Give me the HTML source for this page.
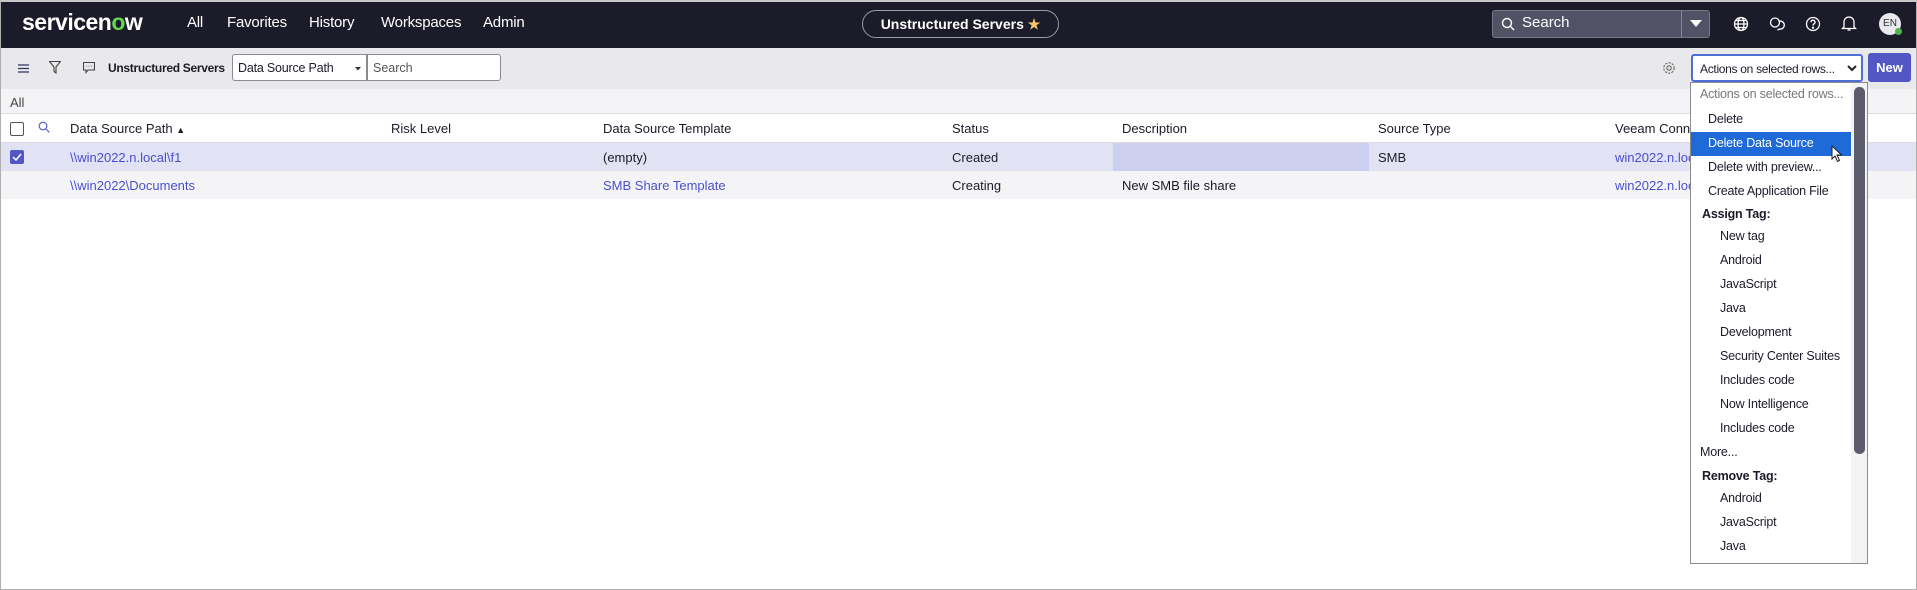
<!DOCTYPE html>
<html><head><meta charset="utf-8"><style>
*{box-sizing:border-box;margin:0;padding:0}
body{width:1917px;height:590px;overflow:hidden;font-family:"Liberation Sans",sans-serif;font-size:13px;color:#1b1b29;background:#fff;position:relative}
.frame{position:absolute;left:0;top:0;width:1917px;height:590px;border:1px solid #b0b0b0;border-top:2px solid #c8c8c8;pointer-events:none;z-index:50}
.a{position:absolute;white-space:nowrap}
.nav{position:absolute;left:0;top:0;width:1917px;height:48px;background:#1b1b29}
.nav .l{color:#fff;font-size:15px;top:14px;letter-spacing:-0.2px}
.tb{position:absolute;left:0;top:48px;width:1917px;height:41px;background:#e9e9ec}
.allr{position:absolute;left:0;top:89px;width:1917px;height:25px;background:#f4f4f6;border-bottom:1px solid #dcdce0}
.hdr{position:absolute;left:0;top:114px;width:1917px;height:29px;background:#fff;border-bottom:1px solid #dcdce0}
.r1{position:absolute;left:0;top:143px;width:1917px;height:28px;background:#e1e2f3}
.r2{position:absolute;left:0;top:171px;width:1917px;height:28px;background:#f4f4f6}
.lk{color:#4a4fcf}
.dd{position:absolute;left:1690px;top:82px;width:178px;height:482px;background:#fff;border:1px solid #8a8a8f;z-index:10}
.dd .i{position:absolute;white-space:nowrap;font-size:12.5px;letter-spacing:-0.2px}
</style></head><body>
<div class="nav">
 <div class="a" style="left:22px;top:9px;color:#fff;font-size:23px;font-weight:bold;letter-spacing:-0.5px">servicen<span style="color:#62d84e">o</span>w</div>
 <div class="a l" style="left:187px">All</div>
 <div class="a l" style="left:227px">Favorites</div>
 <div class="a l" style="left:309px">History</div>
 <div class="a l" style="left:381px">Workspaces</div>
 <div class="a l" style="left:483px">Admin</div>
 <div class="a" style="left:862px;top:10px;width:197px;height:28px;border:1px solid #9a9aa8;border-radius:14px;color:#fff;font-weight:bold;font-size:14px;text-align:center;line-height:26px">Unstructured Servers <span style="color:#f5c86a">★</span></div>
 <div class="a" style="left:1492px;top:10px;width:218px;height:28px;background:#525266;border:1px solid #77778a;border-radius:3px"></div>
 <div class="a" style="left:1681px;top:10px;width:1px;height:28px;background:#888"></div>
 <svg class="a" style="left:1501px;top:17px" width="14" height="14"><circle cx="6" cy="6" r="4.5" fill="none" stroke="#fff" stroke-width="1.4"/><path d="M9.5 9.5L13 13" stroke="#fff" stroke-width="1.4"/></svg>
 <div class="a" style="left:1522px;top:14px;color:#fff;font-size:15px">Search</div>
 <svg class="a" style="left:1690px;top:20px" width="12" height="8"><path d="M0 0H12L6 7Z" fill="#fff"/></svg>
 <svg class="a" style="left:1733px;top:16px" width="16" height="16" fill="none" stroke="#fff" stroke-width="1.3"><circle cx="8" cy="8" r="6.5"/><ellipse cx="8" cy="8" rx="3" ry="6.5"/><path d="M1.5 8H14.5M2.5 4.5H13.5M2.5 11.5H13.5"/></svg>
 <svg class="a" style="left:1769px;top:16px" width="16" height="16" fill="none" stroke="#fff" stroke-width="1.3"><circle cx="6" cy="6.5" r="4.5"/><path d="M9.5 5.5a4 4 0 1 1 1 7.5l-2 1"/></svg>
 <svg class="a" style="left:1805px;top:16px" width="16" height="16" fill="none" stroke="#fff" stroke-width="1.3"><circle cx="8" cy="8" r="6.5"/><path d="M6 6.2a2 2 0 1 1 2.8 1.8c-.6.3-.8.8-.8 1.5"/><circle cx="8" cy="11.7" r=".5" fill="#fff"/></svg>
 <svg class="a" style="left:1841px;top:15px" width="16" height="17" fill="none" stroke="#fff" stroke-width="1.3"><path d="M3 12V7a5 5 0 0 1 10 0v5l1.5 1.5h-13z"/><path d="M6.5 15h3"/></svg>
 <div class="a" style="left:1879px;top:13px;width:22px;height:22px;border-radius:50%;background:#e9e9ee;color:#333;font-size:10px;text-align:center;line-height:22px">EN</div>
 <div class="a" style="left:1895px;top:28px;width:7px;height:7px;border-radius:50%;background:#4cb648"></div>
</div>
<div class="tb">
 <svg class="a" style="left:18px;top:16px" width="11" height="9" stroke="#333366" stroke-width="1.3"><path d="M0 1H11M0 4.5H11M0 8H11"/></svg>
 <svg class="a" style="left:49px;top:13px" width="12" height="13" fill="none" stroke="#444" stroke-width="1.1"><path d="M.5 .5H11.5L7 6V12L5 10.5V6Z"/></svg>
 <svg class="a" style="left:83px;top:14px" width="12" height="12" fill="none" stroke="#444" stroke-width="1.1"><path d="M.5 .5H11.5V8H5L3 10.5V8H.5Z"/><path d="M3.5 4.2h.6M5.7 4.2h.6M7.9 4.2h.6"/></svg>
 <div class="a" style="left:108px;top:13px;font-weight:bold;font-size:12px;letter-spacing:-0.3px">Unstructured Servers</div>
 <div class="a" style="left:232px;top:6px;width:135px;height:27px;background:#fff;border:1px solid #8a8a90;border-radius:3px 0 0 3px;padding:6px 5px;font-size:12.5px;letter-spacing:-0.2px">Data Source Path</div>
 <svg class="a" style="left:355px;top:19px" width="6" height="4"><path d="M0 0H6L3 3.5Z" fill="#333"/></svg>
 <div class="a" style="left:367px;top:6px;width:134px;height:27px;background:#fff;border:1px solid #8a8a90;border-radius:0 3px 3px 0;padding:6px 5px;color:#555;font-size:12.5px">Search</div>
 <svg class="a" style="left:1662px;top:13px" width="14" height="14" fill="none" stroke="#666" stroke-width="1.1"><circle cx="7" cy="7" r="2.2"/><circle cx="7" cy="7" r="5.2" stroke-dasharray="2.2 1.2"/></svg>
 <div class="a" style="left:1691px;top:6px;width:172px;height:28px;background:#fff;border:2px solid #4f6ed8;border-radius:3px;padding:6px 7px;font-size:12px;letter-spacing:-0.3px">Actions on selected rows...</div>
 <svg class="a" style="left:1847px;top:17px" width="10" height="7" fill="none" stroke="#222" stroke-width="2"><path d="M1 1L5 5L9 1"/></svg>
 <div class="a" style="left:1868px;top:5px;width:43px;height:29px;background:#5357c5;border-radius:3px;color:#fff;font-weight:bold;font-size:13px;text-align:center;line-height:29px">New</div>
</div>
<div class="allr"><div class="a" style="left:10px;top:6px;color:#444">All</div></div>
<div class="hdr">
 <div class="a" style="left:10px;top:8px;width:14px;height:14px;border:1px solid #555;border-radius:2px;background:#fff"></div>
 <svg class="a" style="left:38px;top:7px" width="12" height="12" fill="none" stroke="#5a5fc8" stroke-width="1.2"><circle cx="5" cy="5" r="3.8"/><path d="M8 8L11.5 11.5"/></svg>
 <div class="a" style="left:70px;top:7px">Data Source Path <span style="font-size:9px">▲</span></div>
 <div class="a" style="left:391px;top:7px">Risk Level</div>
 <div class="a" style="left:603px;top:7px">Data Source Template</div>
 <div class="a" style="left:952px;top:7px">Status</div>
 <div class="a" style="left:1122px;top:7px">Description</div>
 <div class="a" style="left:1378px;top:7px">Source Type</div>
 <div class="a" style="left:1615px;top:7px">Veeam Connector</div>
</div>
<div class="r1">
 <div class="a" style="left:10px;top:7px;width:14px;height:14px;border-radius:2px;background:#5357c5"></div>
 <svg class="a" style="left:12px;top:10px" width="10" height="8" fill="none" stroke="#fff" stroke-width="1.5"><path d="M1 4L4 7L9 1"/></svg>
 <div class="a lk" style="left:70px;top:7px">\\win2022.n.local\f1</div>
 <div class="a" style="left:603px;top:7px">(empty)</div>
 <div class="a" style="left:952px;top:7px">Created</div>
 <div class="a" style="left:1113px;top:0;width:256px;height:28px;background:#cdcff0"></div>
 <div class="a" style="left:1378px;top:7px">SMB</div>
 <div class="a lk" style="left:1615px;top:7px">win2022.n.local</div>
</div>
<div class="r2">
 <div class="a lk" style="left:70px;top:7px">\\win2022\Documents</div>
 <div class="a lk" style="left:603px;top:7px">SMB Share Template</div>
 <div class="a" style="left:952px;top:7px">Creating</div>
 <div class="a" style="left:1122px;top:7px">New SMB file share</div>
 <div class="a lk" style="left:1615px;top:7px">win2022.n.local</div>
</div>
<div class="dd">
 <div class="a" style="left:160px;top:0;width:16px;height:480px;background:#f3f3f5"></div>
 <div class="a" style="left:163px;top:4px;width:11px;height:367px;background:#5d5c6d;border-radius:5px"></div>
 <div class="a" style="left:0;top:49px;width:160px;height:24px;background:#1d6ad8"></div>
 <div class="i" style="left:9px;top:4px;color:#777">Actions on selected rows...</div>
 <div class="i" style="left:17px;top:29px">Delete</div>
 <div class="i" style="left:17px;top:53px;color:#fff">Delete Data Source</div>
 <div class="i" style="left:17px;top:77px">Delete with preview...</div>
 <div class="i" style="left:17px;top:101px">Create Application File</div>
 <div class="i" style="left:11px;top:124px;font-weight:bold">Assign Tag:</div>
 <div class="i" style="left:29px;top:146px">New tag</div>
 <div class="i" style="left:29px;top:170px">Android</div>
 <div class="i" style="left:29px;top:194px">JavaScript</div>
 <div class="i" style="left:29px;top:218px">Java</div>
 <div class="i" style="left:29px;top:242px">Development</div>
 <div class="i" style="left:29px;top:266px">Security Center Suites</div>
 <div class="i" style="left:29px;top:290px">Includes code</div>
 <div class="i" style="left:29px;top:314px">Now Intelligence</div>
 <div class="i" style="left:29px;top:338px">Includes code</div>
 <div class="i" style="left:9px;top:362px">More...</div>
 <div class="i" style="left:11px;top:386px;font-weight:bold">Remove Tag:</div>
 <div class="i" style="left:29px;top:408px">Android</div>
 <div class="i" style="left:29px;top:432px">JavaScript</div>
 <div class="i" style="left:29px;top:456px">Java</div>
 <svg class="a" style="left:140px;top:62px" width="12" height="18"><path d="M1 1V14L4 11L6.5 16.5L8.5 15.5L6 10H10.5Z" fill="#fff" stroke="#222" stroke-width="1"/></svg>
</div>
<div class="frame"></div>
</body></html>
